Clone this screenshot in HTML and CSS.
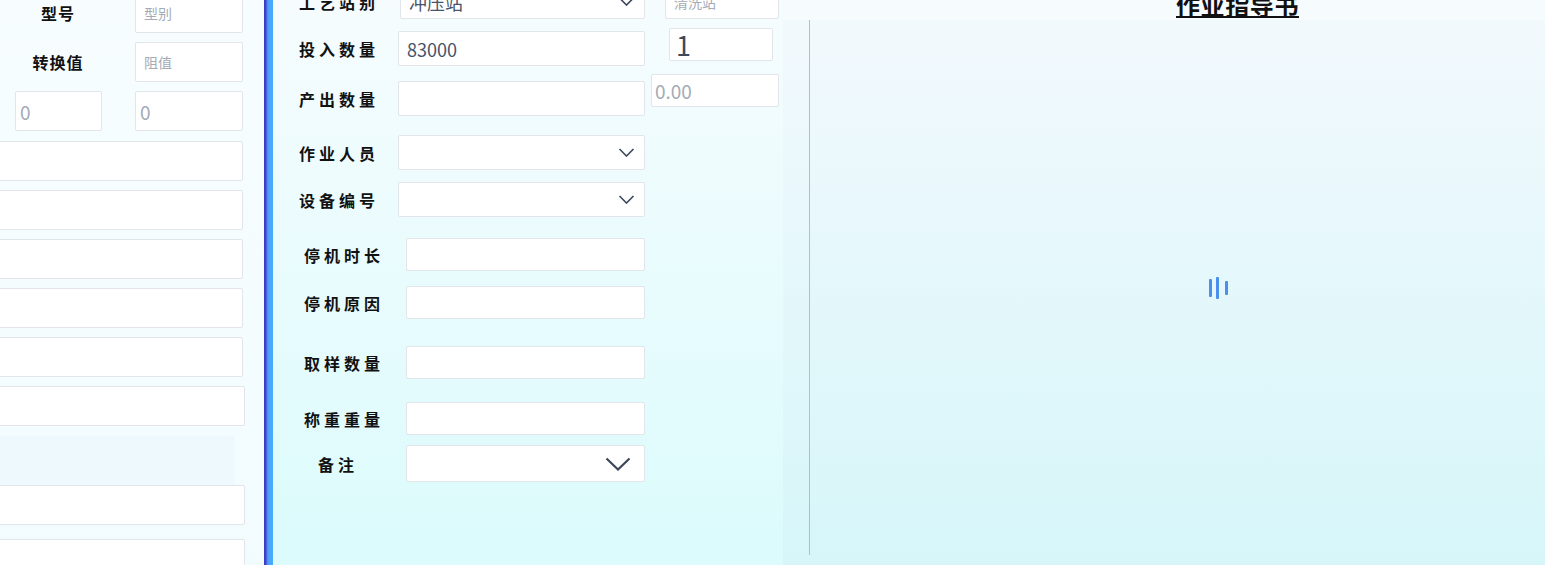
FILE: index.html
```html
<!DOCTYPE html>
<html lang="zh-CN">
<head>
    <meta charset="UTF-8">
    <title>报工</title>
    <link rel="stylesheet" href="styles.css">
</head>
<body>
    <aside class="left">
        <div class="lrow first">
            <span class="llabel">型号</span>
            <input class="box" placeholder="型别">
        </div>
        <div class="lrow">
            <span class="llabel">转换值</span>
            <input class="box" placeholder="阻值">
        </div>
        <div class="lrow last">
            <input class="box small num" placeholder="0">
            <input class="box num" placeholder="0">
        </div>
        <input class="box wide">
        <input class="box wide">
        <input class="box wide">
        <input class="box wide">
        <input class="box wide">
        <input class="box wide w2">
        <div class="band"></div>
        <input class="box wide w2 tight">
        <input class="box wide w2 low">
    </aside>

    <div class="divider"></div>

    <main class="middle">
        <div class="form">
            <div class="row r1">
                <span class="label">工艺站别</span>
                <div class="box select shift"><span class="val">冲压站</span><svg class="chev" viewBox="0 0 16 9"><path d="M1 1l7 7 7-7"/></svg></div>
            </div>
            <div class="row r2">
                <span class="label">投入数量</span>
                <input class="box val" value="83000">
            </div>
            <div class="row r3">
                <span class="label">产出数量</span>
                <input class="box">
            </div>
            <div class="row r4">
                <span class="label">作业人员</span>
                <div class="box select"><svg class="chev" viewBox="0 0 16 9"><path d="M1 1l7 7 7-7"/></svg></div>
            </div>
            <div class="row r5">
                <span class="label">设备编号</span>
                <div class="box select"><svg class="chev" viewBox="0 0 16 9"><path d="M1 1l7 7 7-7"/></svg></div>
            </div>
            <div class="row in r6">
                <span class="label">停机时长</span>
                <input class="box">
            </div>
            <div class="row in r7">
                <span class="label">停机原因</span>
                <input class="box">
            </div>
            <div class="row in r8">
                <span class="label">取样数量</span>
                <input class="box">
            </div>
            <div class="row in r9">
                <span class="label">称重重量</span>
                <input class="box">
            </div>
            <div class="row in r10">
                <span class="label short">备注</span>
                <div class="box select big"><svg class="chev" viewBox="0 0 26 14"><path d="M1.5 1.5l11.5 11 11.5-11"/></svg></div>
            </div>
        </div>
        <div class="side">
            <input class="box s1" placeholder="清洗站">
            <input class="box s2" value="1">
            <input class="box s3" placeholder="0.00">
        </div>
    </main>

    <section class="right">
        <div class="head"><span class="title">作业指导书</span></div>
        <div class="doc">
            <div class="loader"><i class="b1"></i><i class="b2"></i><i class="b3"></i></div>
        </div>
    </section>
</body>
</html>
```

FILE: styles.css
```css
body { margin: 0; height: 565px; overflow: hidden; display: flex; font-family: "Noto Sans CJK SC", "Noto Sans", sans-serif; color: #111; background: #f4fcfe; }
input { font-family: inherit; outline: none; }
.box { box-sizing: border-box; background: #fff; border: 1px solid #e2e5ea; border-radius: 2px; padding: 0 8px; margin: 0; font-size: 14px; color: #3e4a5c; flex-shrink: 0; }
.box::placeholder { color: #a4abb6; }

/* left column */
.left { width: 264px; flex: none; background: linear-gradient(#f7fdff, #f2fcfe); display: flex; flex-direction: column; gap: 9px; }
.left > * { flex-shrink: 0; }
.lrow { display: flex; align-items: center; height: 40px; }
.lrow.first { margin-top: -7px; }
.lrow.last { margin-bottom: 1px; }
.lrow .box { width: 108px; height: 40px; margin-left: 19px; }
.llabel { width: 116px; text-align: center; font-size: 16px; font-weight: 700; letter-spacing: 1px; }
.lrow .box.small { width: 87px; margin-left: 15px; margin-right: 14px; }
.lrow .box.num { font-size: 19px; padding-left: 4px; }
.box.wide { width: 263px; height: 40px; margin-left: -20px; }
.box.wide.w2 { width: 265px; }
.band { width: 235px; height: 49px; margin: 1px 0 -9px; background: #eef9fd; }
.box.low { margin-top: 5px; }

.divider { width: 9px; flex: none; background: linear-gradient(90deg, #3e38c2 0, #4443c8 2px, #4c86ee 3px, #4aa6fa 5px, #49aafb 9px); }

/* middle form */
.middle { width: 510px; flex: none; display: flex; background: linear-gradient(#f6fcfe, #dbfbfc); }
.form { width: 372px; padding-left: 26px; box-sizing: border-box; display: flex; flex-direction: column; }
.row { display: flex; align-items: center; flex-shrink: 0; }
.row .box { height: 35px; width: 247px; }
.label { width: 99px; flex: none; font-size: 16px; font-weight: 700; letter-spacing: 4px; }
.row.in .label { width: 102px; margin-left: 5px; }
.row.in .box { width: 239px; height: 33px; }
.label.short { padding-left: 14px; box-sizing: border-box; }
.select { display: flex; align-items: center; justify-content: space-between; padding-right: 9px; }
.select.shift { width: 245px; margin-left: 2px; }
.select .val, .box.val { font-size: 18px; color: #46536a; }
.chev { width: 17px; height: 9px; margin-left: auto; fill: none; stroke: #3b4759; stroke-width: 1.6; }
.big .chev { width: 26px; height: 14px; stroke-width: 2.2; margin-right: 4px; }
.r1 { margin-top: -16px; }
.r2 { margin-top: 12px; }
.r3 { margin-top: 15px; }
.r4 { margin-top: 19px; }
.r5 { margin-top: 12px; }
.r6 { margin-top: 21px; }
.r7 { margin-top: 15px; }
.r8 { margin-top: 27px; }
.r9 { margin-top: 23px; }
.r10 { margin-top: 10px; }
.row.r10 .box { height: 37px; }

.side { width: 138px; display: flex; flex-direction: column; }
.side .s1 { width: 114px; height: 35px; margin: -16px 0 0 20px; }
.side .s2 { width: 104px; height: 33px; margin: 9px 0 0 24px; font-size: 27px; color: #3c485c; padding-left: 6px; }
.side .s3 { width: 128px; height: 33px; margin: 13px 0 0 6px; font-size: 19px; padding-left: 3px; }

/* guide document */
.right { flex: 1; display: flex; flex-direction: column; background: #f6fcfe; }
.head { height: 20px; padding-left: 393px; line-height: 1; }
.title { display: inline-block; margin-top: -19px; font-size: 24px; font-weight: 700; letter-spacing: 0.6px; text-decoration: underline; text-decoration-thickness: 2px; text-underline-offset: 1px; }
.doc { flex: 1; background: linear-gradient(#f2f9fd, #d6f6f9); padding-left: 26px; padding-bottom: 10px; display: flex; }
.doc .loader { flex: 1; border-left: 1px solid #b6bdc4; display: flex; align-items: center; justify-content: center; padding-left: 82px; gap: 4px; }
.loader i { display: block; width: 3px; background: #4a8fec; border-radius: 1px; }
.loader .b1 { height: 18px; }
.loader .b2 { height: 22px; }
.loader .b3 { height: 14px; margin-left: 2px; }
```
